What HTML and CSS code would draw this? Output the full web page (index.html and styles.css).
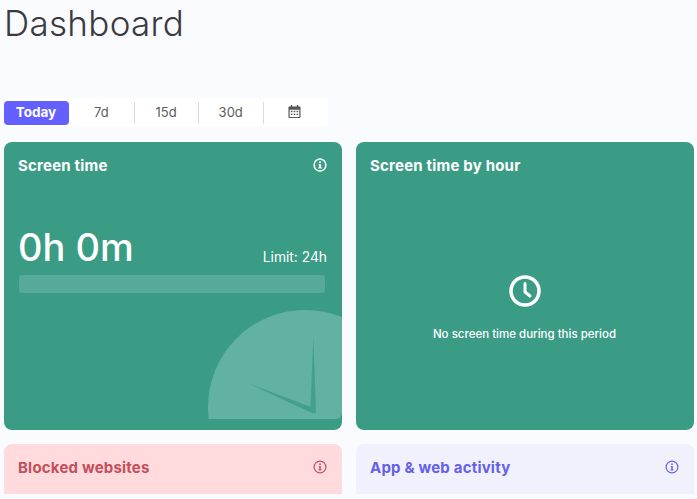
FILE: index.html
```html
<!DOCTYPE html>
<html lang="en">
<head>
    <meta charset="UTF-8">
    <meta name="viewport" content="width=device-width, initial-scale=1.0">
    <title>Dashboard</title>
    <link rel="stylesheet" href="styles.css">
</head>
<body>
    <div class="page">
        <h1 class="page-title">Dashboard</h1>

        <div class="range-tabs">
            <button class="range-tab active">Today</button>
            <button class="range-tab">7d</button>
            <button class="range-tab">15d</button>
            <button class="range-tab">30d</button>
            <button class="range-tab plain" aria-label="Pick dates">
                <svg class="calendar-icon" viewBox="0 0 14 14" width="13" height="13">
                    <path fill="#555" fill-rule="evenodd" d="M3 0h1.500v1.500h5V0H11v1.500h1.500A1 1 0 0 1 13.500 2.500V13a1 1 0 0 1-1 1h-11a1 1 0 0 1-1-1V2.500a1 1 0 0 1 1-1H3zM1.800 5.200V12.800h10.400V5.200zM3 6.300h1.800v1.500H3zm3.100 0h1.800v1.500H6.100zm3.100 0H11v1.500H9.200zM3 9.300h1.800v1.500H3zm3.100 0h1.800v1.500H6.100zm3.100 0H11v1.500H9.200z"/>
                </svg>
            </button>
        </div>

        <div class="card-grid">
            <section class="card green">
                <div class="card-head">
                    <h2>Screen time</h2>
                    <svg class="info-icon" viewBox="0 0 14 14" width="14" height="14">
                        <circle cx="7" cy="7" r="5.900" fill="none" stroke="currentColor" stroke-width="1.500"/>
                        <path fill="currentColor" d="M6 3.400h2v1.700H6zM5.700 6h2.400v3.300h.6v1.300H5.400V9.300h.8V7.300h-.5z"/>
                    </svg>
                </div>
                <div class="time-row">
                    <span class="time-value">0h 0m</span>
                    <span class="time-limit">Limit: 24h</span>
                </div>
                <div class="time-bar"></div>
                <svg class="clock-art" viewBox="0 0 134 109" width="134" height="109">
                    <circle cx="97" cy="97" r="97" fill="#62b2a1"/>
                    <path fill="#449f8b" d="M105.300 26.500L108 101Q108.300 104 105 103.500L40.300 73.300L102.500 96.700z"/>
                </svg>
            </section>

            <section class="card green">
                <div class="card-head">
                    <h2>Screen time by hour</h2>
                </div>
                <div class="empty-state">
                    <svg viewBox="0 0 32 32" width="32" height="32">
                        <circle cx="16" cy="16" r="14" fill="none" stroke="#fff" stroke-width="3.500"/>
                        <path d="M16 8.500V17l5 4" fill="none" stroke="#fff" stroke-width="3" stroke-linecap="round" stroke-linejoin="round"/>
                    </svg>
                    <p>No screen time during this period</p>
                </div>
            </section>

            <section class="card pink">
                <div class="card-head">
                    <h2>Blocked websites</h2>
                    <svg class="info-icon" viewBox="0 0 14 14" width="14" height="14">
                        <circle cx="7" cy="7" r="5.900" fill="none" stroke="currentColor" stroke-width="1.200"/>
                        <path fill="currentColor" d="M6.200 3.500h1.600v1.500H6.200zM5.800 6h2v3.400h.7v1.100H5.500V9.400h.8V7.100h-.5z"/>
                    </svg>
                </div>
            </section>

            <section class="card lavender">
                <div class="card-head">
                    <h2>App &amp; web activity</h2>
                    <svg class="info-icon" viewBox="0 0 14 14" width="14" height="14">
                        <circle cx="7" cy="7" r="5.900" fill="none" stroke="currentColor" stroke-width="1.200"/>
                        <path fill="currentColor" d="M6.200 3.500h1.600v1.500H6.200zM5.800 6h2v3.400h.7v1.100H5.500V9.400h.8V7.100h-.5z"/>
                    </svg>
                </div>
            </section>
        </div>
    </div>
</body>
</html>
```

FILE: styles.css
```css
html, body {
    height: 100%;
}
body {
    margin: 0;
    overflow: hidden;
    font-family: Inter, "Noto Sans", sans-serif;
    background-color: #f9fbff;
    color: #333;
}
.page {
    height: 494px;
    overflow: hidden;
    padding: 0 3px 0 4px;
}
.page-title {
    margin: 0;
    height: 98px;
    font-size: 35px;
    line-height: 46px;
    font-weight: 300;
    letter-spacing: 0.3px;
    color: #3a3a3f;
}
.range-tabs {
    display: flex;
    align-items: center;
    width: 324px;
    height: 29px;
    background: #ffffff;
    border-radius: 3px;
}
.range-tab {
    flex: none;
    width: 64.700px;
    height: 22px;
    padding: 0 1px 2px 0;
    border: none;
    border-right: 1px solid #d9d9d9;
    background: none;
    font-family: inherit;
    font-size: 13px;
    color: #5c5c5c;
    display: flex;
    align-items: center;
    justify-content: center;
}
.range-tab.active {
    width: 65px;
    height: 24px;
    margin-right: 1px;
    border: none;
    border-radius: 4px;
    background-color: #6460ff;
    color: #ffffff;
    font-size: 13.500px;
    font-weight: 700;
}
.range-tab.plain {
    width: 62px;
    border-right: none;
}
.card-grid {
    display: grid;
    grid-template-columns: 338px 338px;
    grid-template-rows: 288px 100px;
    gap: 14px;
    margin-top: 15px;
}
.card {
    position: relative;
    overflow: hidden;
    border-radius: 8px;
    padding: 13px 15px 13px 14px;
    box-sizing: border-box;
}
.card.green {
    background-color: #3b9c86;
    color: #ffffff;
}
.card.pink {
    background-color: #ffdbde;
    color: #c24f5b;
}
.card.lavender {
    background-color: #f1f1fd;
    color: #6460e8;
}
.card-head {
    display: flex;
    justify-content: space-between;
    align-items: center;
    height: 20px;
}
.card-head h2 {
    margin: 0;
    font-size: 15px;
    font-weight: 700;
    letter-spacing: 0.2px;
}
.time-row {
    display: flex;
    justify-content: space-between;
    align-items: flex-end;
    margin-top: 47px;
}
.time-value {
    font-size: 38px;
    line-height: 50px;
    font-weight: 500;
}
.time-limit {
    font-size: 13.800px;
    line-height: 20px;
    padding-bottom: 5px;
}
.time-bar {
    height: 18px;
    margin: 3px 2px 0 1px;
    border-radius: 3px;
    background: rgba(255, 255, 255, 0.15);
}
.clock-art {
    position: absolute;
    right: 0;
    top: 168px;
    border-bottom-right-radius: 6px;
}
.empty-state {
    display: flex;
    flex-direction: column;
    align-items: center;
    margin-top: 100px;
}
.empty-state p {
    margin: 20px 0 0;
    font-size: 11.500px;
    font-weight: 500;
}
```
